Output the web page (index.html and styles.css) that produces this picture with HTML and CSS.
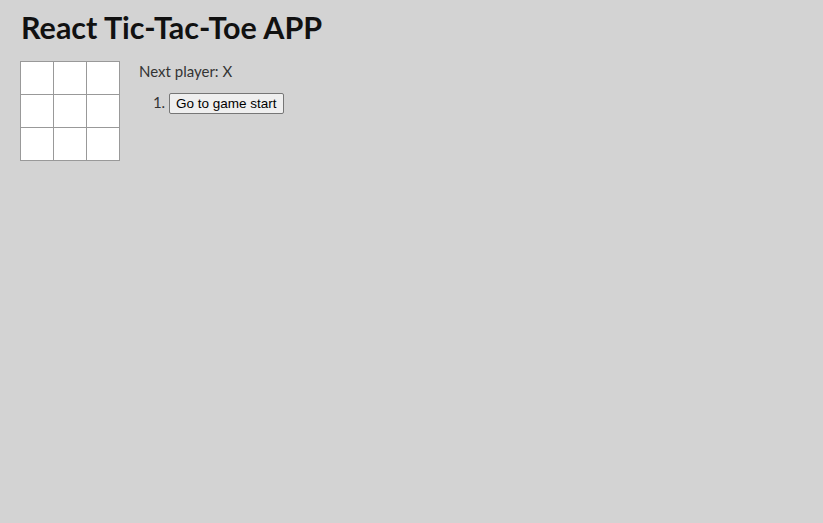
FILE: index.html
```html
<!DOCTYPE html>
<html>
<head>
<meta charset="utf-8">
<link rel="stylesheet" href="styles.css">
</head>
<body>
<div class="app">
  <h1 class="title">React Tic-Tac-Toe APP</h1>
  <div class="game">
    <div class="board">
      <div class="row"><button class="square"></button><button class="square"></button><button class="square"></button></div>
      <div class="row"><button class="square"></button><button class="square"></button><button class="square"></button></div>
      <div class="row"><button class="square"></button><button class="square"></button><button class="square"></button></div>
    </div>
    <div class="info">
      <div class="status">Next player: X</div>
      <ol class="moves">
        <li><button class="move">Go to game start</button></li>
      </ol>
    </div>
  </div>
</div>
</body>
</html>
```

FILE: styles.css
```css
html, body {
  margin: 0;
  padding: 0;
  background: #d3d3d3;
  height: 100%;
}
body {
  font-family: "Century Gothic", "Lato", "DejaVu Sans", sans-serif;
  color: #222;
}
.app {
  padding: 6px 20px;
}
.title {
  margin: 0;
  font-size: 30.5px;
  font-weight: 700;
  line-height: 42px;
  color: #111;
  padding-left: 1px;
}
.game {
  display: flex;
  margin-top: 13px;
}
.board {
  display: flex;
  flex-direction: column;
}
.row {
  display: flex;
}
.square {
  width: 34px;
  height: 34px;
  background: #fff;
  border: 1px solid #999;
  margin: -1px -1px 0 0;
  padding: 0;
  font-size: 24px;
}
.row:first-child .square {
  margin-top: 0;
}
.info {
  margin-left: 20px;
  font-size: 15px;
  color: #333;
}
.status {
  line-height: 18px;
  margin-top: 1px;
}
.moves {
  margin: 13px 0 0;
  padding-left: 30px;
  font-size: 15px;
}
.move {
  font-family: "Liberation Sans", Arial, sans-serif;
  font-size: 13.5px;
  color: #000;
  background: #efefef;
  border: 1px solid #767676;
  border-radius: 2px;
  padding: 2px 6px;
}
```
